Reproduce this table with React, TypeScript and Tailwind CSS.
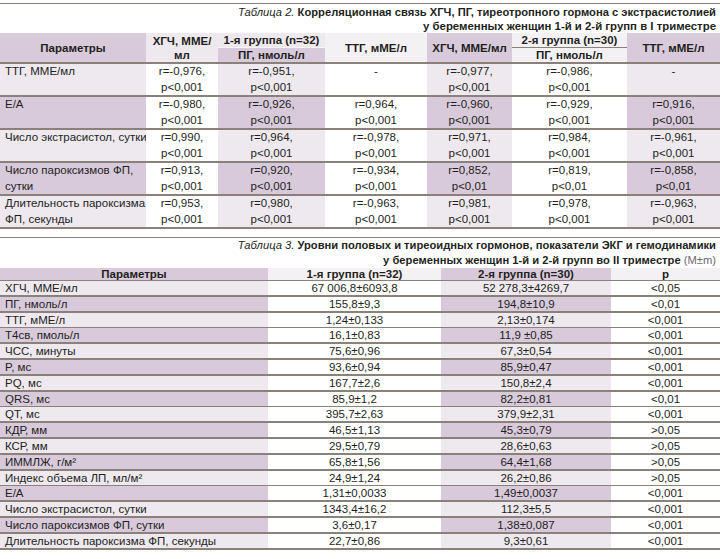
import React from "react";

const DARK = "bg-[#d8cadb]";
const LIGHT = "bg-[#eee8ef]";

const t2Rows = [
  { p: ["ТТГ, МME/мл"], v: [["r=-0,976,", "p<0,001"], ["r=-0,951,", "p<0,001"], ["-", ""], ["r=-0,977,", "p<0,001"], ["r=-0,986,", "p<0,001"], ["-", ""]] },
  { p: ["Е/А"], v: [["r=-0,980,", "p<0,001"], ["r=-0,926,", "p<0,001"], ["r=0,964,", "p<0,001"], ["r=-0,960,", "p<0,001"], ["r=-0,929,", "p<0,001"], ["r=0,916,", "p<0,001"]] },
  { p: ["Число экстрасистол, сутки"], v: [["r=0,990,", "p<0,001"], ["r=0,964,", "p<0,001"], ["r=-0,978,", "p<0,001"], ["r=0,971,", "p<0,001"], ["r=0,984,", "p<0,001"], ["r=-0,961,", "p<0,001"]] },
  { p: ["Число пароксизмов ФП,", "сутки"], v: [["r=0,913,", "p<0,001"], ["r=0,920,", "p<0,001"], ["r=-0,934,", "p<0,001"], ["r=0,852,", "p<0,01"], ["r=0,819,", "p<0,01"], ["r=-0,858,", "p<0,01"]] },
  { p: ["Длительность пароксизма", "ФП, секунды"], v: [["r=0,953,", "p<0,001"], ["r=0,980,", "p<0,001"], ["r=-0,963,", "p<0,001"], ["r=0,981,", "p<0,001"], ["r=0,978,", "p<0,001"], ["r=-0,963,", "p<0,001"]] },
];

const t3Rows = [
  ["ХГЧ, МME/мл", "67 006,8±6093,8", "52 278,3±4269,7", "<0,05"],
  ["ПГ, нмоль/л", "155,8±9,3", "194,8±10,9", "<0,01"],
  ["ТТГ, мМЕ/л", "1,24±0,133", "2,13±0,174", "<0,001"],
  ["Т4св, пмоль/л", "16,1±0,83", "11,9 ±0,85", "<0,001"],
  ["ЧСС, минуты", "75,6±0,96", "67,3±0,54", "<0,001"],
  ["P, мс", "93,6±0,94", "85,9±0,47", "<0,001"],
  ["PQ, мс", "167,7±2,6", "150,8±2,4", "<0,001"],
  ["QRS, мс", "85,9±1,2", "82,2±0,81", "<0,01"],
  ["QT, мс", "395,7±2,63", "379,9±2,31", "<0,001"],
  ["КДР, мм", "46,5±1,13", "45,3±0,79", ">0,05"],
  ["КСР, мм", "29,5±0,79", "28,6±0,63", ">0,05"],
  ["ИММЛЖ, г/м²", "65,8±1,56", "64,4±1,68", ">0,05"],
  ["Индекс объема ЛП, мл/м²", "24,9±1,24", "26,2±0,86", ">0,05"],
  ["Е/А", "1,31±0,0033", "1,49±0,0037", "<0,001"],
  ["Число экстрасистол, сутки", "1343,4±16,2", "112,3±5,5", "<0,001"],
  ["Число пароксизмов ФП, сутки", "3,6±0,17", "1,38±0,087", "<0,001"],
  ["Длительность пароксизма ФП, секунды", "22,7±0,86", "9,3±0,61", "<0,001"],
];

function Table2() {
  return (
    <div>
      <div className="grid grid-cols-[146px_72px_107px_102px_85px_115px_93px] grid-rows-[15px_14px] border-b-2 border-[#8b817b] font-bold leading-[14px] whitespace-nowrap">
        <div className={`row-span-2 ${DARK} flex items-center justify-center`}>Параметры</div>
        <div className="row-span-2 bg-[#eee8ef] flex items-center justify-center text-center">ХГЧ, МME/<br />мл</div>
        <div className="bg-[#eee8ef] flex items-center justify-center border-b border-[#f8f6f8]">1-я группа (n=32)</div>
        <div className="row-span-2 bg-[#f4f1f4] flex items-center justify-center">ТТГ, мМЕ/л</div>
        <div className={`row-span-2 ${DARK} flex items-center justify-center`}>ХГЧ, МME/мл</div>
        <div className="bg-[#f4f1f4] flex items-center justify-center border-b border-[#8b817b]">2-я группа (n=30)</div>
        <div className={`row-span-2 ${DARK} flex items-center justify-center`}>ТТГ, мМЕ/л</div>
        <div className={`${DARK} flex items-center justify-center`}>ПГ, нмоль/л</div>
        <div className="bg-[#f4f1f4] flex items-center justify-center">ПГ, нмоль/л</div>
      </div>
      {t2Rows.map((r, i) => {
        const shade = i % 2 === 0 ? LIGHT : DARK;
        return (
          <div key={i} className="grid grid-cols-[146px_72px_107px_102px_85px_115px_93px] h-[33px] border-b-2 border-[#8b817b] leading-[15.5px] whitespace-nowrap">
            <div className={`${shade} px-[5px]`}>
              {r.p.map((l, j) => (
                <div key={j}>{l}</div>
              ))}
            </div>
            {r.v.map((c, j) => (
              <div key={j} className={`${j % 2 === 1 ? shade : "bg-white"} text-center`}>
                <div>{c[0]}</div>
                <div>{c[1]}</div>
              </div>
            ))}
          </div>
        );
      })}
    </div>
  );
}

function Table3() {
  return (
    <div>
      <div className="grid grid-cols-[268px_173px_170px_109px] h-[13px] border-b-2 border-[#8b817b] font-bold leading-[12px]">
        <div className={`${DARK} text-center`}>Параметры</div>
        <div className="bg-[#f4f1f4] text-center">1-я группа (n=32)</div>
        <div className={`${DARK} text-center`}>2-я группа (n=30)</div>
        <div className="bg-[#f4f1f4] text-center">p</div>
      </div>
      {t3Rows.map((r, i) => {
        const shade = i % 2 === 0 ? LIGHT : DARK;
        return (
          <div key={i} className="grid grid-cols-[268px_173px_170px_109px] h-[15.8px] border-b-2 border-[#8b817b] leading-[14px] whitespace-nowrap">
            <div className={`${shade} px-[5px]`}>{r[0]}</div>
            <div className="bg-white text-center">{r[1]}</div>
            <div className={`${shade} text-center`}>{r[2]}</div>
            <div className="bg-white text-center">{r[3]}</div>
          </div>
        );
      })}
    </div>
  );
}

export default function App() {
  return (
    <div className="w-[720px] h-[559px] bg-white text-[#231f20] text-[11.5px] font-['Liberation_Sans',Arial,sans-serif] overflow-hidden">
      <div className="pt-[3px]">
        <div className="border-t border-[#8b817b]" />
        <div className="pt-[1px] pr-[4px] text-right leading-[14px] whitespace-nowrap">
          <div className="text-[11.2px] leading-[15px]">
            <span className="italic">Таблица 2.</span>{" "}
            <span className="font-bold">Корреляционная связь ХГЧ, ПГ, тиреотропного гормона с экстрасистолией</span>
          </div>
          <div className="font-bold text-[11.4px] leading-[13px]">у беременных женщин 1-й и 2-й групп в I триместре</div>
        </div>
        <Table2 />
      </div>
      <div className="pt-[8px]">
        <div className="border-t border-[#8b817b]" />
        <div className="pr-[4px] text-right leading-[15px] whitespace-nowrap text-[11.2px]">
          <div>
            <span className="italic">Таблица 3.</span>{" "}
            <span className="font-bold">Уровни половых и тиреоидных гормонов, показатели ЭКГ и гемодинамики</span>
          </div>
          <div>
            <span className="font-bold">у беременных женщин 1-й и 2-й групп во II триместре</span>{" "}
            <span className="text-[#6e6a6c]">(M±m)</span>
          </div>
        </div>
        <Table3 />
      </div>
    </div>
  );
}
